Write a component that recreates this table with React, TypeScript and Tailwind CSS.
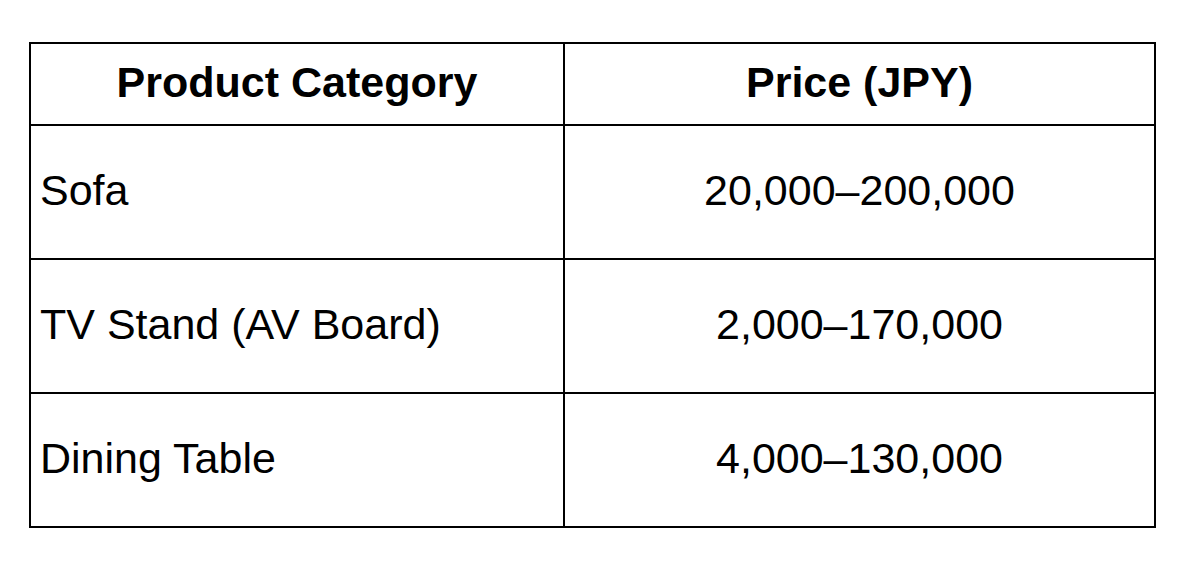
const rows = [
  { name: 'Sofa', price: '20,000–200,000' },
  { name: 'TV Stand (AV Board)', price: '2,000–170,000' },
  { name: 'Dining Table', price: '4,000–130,000' },
]

export default function App() {
  return (
    <div className="w-[1200px] h-[570px] bg-white pl-[29px] pt-[42px] font-['Liberation_Sans',Arial,sans-serif] text-[43px] text-black">
      <div className="w-[1127px] border-2 border-black">
        <div className="flex h-[82px] border-b-2 border-black">
          <div className="w-[534px] border-r-2 border-black flex items-center justify-center pb-[3px] font-bold">
            Product Category
          </div>
          <div className="flex-1 flex items-center justify-center pb-[3px] font-bold">Price (JPY)</div>
        </div>
        {rows.map((r, i) => (
          <div
            key={r.name}
            className={i < rows.length - 1 ? 'flex h-[134px] border-b-2 border-black' : 'flex h-[132px]'}
          >
            <div className="w-[534px] border-r-2 border-black flex items-center pl-[9px] pb-[4px]">{r.name}</div>
            <div className="flex-1 flex items-center justify-center pb-[4px]">{r.price}</div>
          </div>
        ))}
      </div>
    </div>
  )
}
